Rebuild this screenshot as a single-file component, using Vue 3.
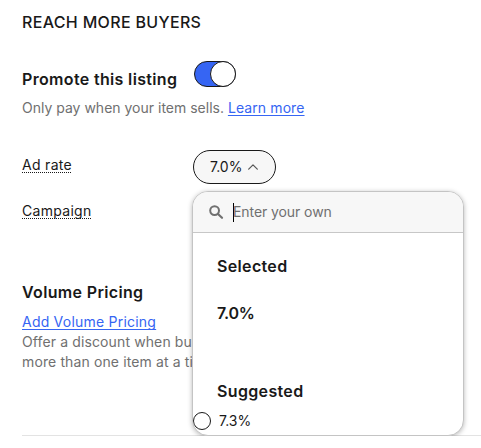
<script setup>
import { ref } from 'vue'

const promoted = ref(true)
const adRate = ref('7.0%')
const suggestedRate = ref('7.3%')
</script>

<template>
  <main class="panel">
    <h2 class="section-title">REACH MORE BUYERS</h2>

    <div class="promote">
      <h3 class="subtitle promote-title">Promote this listing</h3>
      <button class="switch" :class="{ on: promoted }" role="switch" :aria-checked="promoted" @click="promoted = !promoted">
        <span class="knob"></span>
      </button>
    </div>
    <p class="hint"><span class="pay">Only pay when your item sells.</span> <a class="link learn">Learn more</a></p>

    <div class="field rate-field">
      <span class="label rate-label">Ad rate</span>
      <div class="select">
        <button class="select-button">
          <span>{{ adRate }}</span>
          <svg class="chevron" width="10" height="6" viewBox="0 0 10 6">
            <path d="M0.7 5.2 L5 0.9 L9.3 5.2" fill="none" stroke="#555" stroke-width="1.2" stroke-linecap="round" stroke-linejoin="round" />
          </svg>
        </button>
        <div class="menu">
          <div class="search">
            <svg class="search-icon" width="15" height="15" viewBox="0 0 15 15">
              <circle cx="5.6" cy="5.6" r="4.4" fill="none" stroke="#707070" stroke-width="2" />
              <path d="M9 9 L13 12.8" stroke="#707070" stroke-width="2.2" stroke-linecap="round" />
            </svg>
            <span class="caret"></span>
            <span class="placeholder">Enter your own</span>
          </div>
          <div class="menu-title selected">Selected</div>
          <div class="menu-title value">{{ adRate }}</div>
          <div class="menu-title suggested">Suggested</div>
          <div class="option">
            <span class="radio"></span>
            <span>{{ suggestedRate }}</span>
          </div>
        </div>
      </div>
    </div>

    <div class="field campaign-field">
      <span class="label campaign-label">Campaign</span>
    </div>

    <section class="volume">
      <h3 class="subtitle volume-title">Volume Pricing</h3>
      <a class="link volume-link">Add Volume Pricing</a>
      <p class="offer">Offer a discount when buyers purchase<br />more than one item at a time</p>
    </section>
  </main>
</template>

<style>
body {
  margin: 0;
  background: #fff;
}
</style>

<style scoped>
.panel {
  box-sizing: border-box;
  height: 436px;
  margin-left: 22px;
  padding-top: 12px;
  border-bottom: 1px solid #e3e3e3;
  font-family: Inter, "Liberation Sans", sans-serif;
  font-size: 14px;
  line-height: 20px;
  color: #191919;
  white-space: nowrap;
}
h2, h3, p {
  margin: 0;
}
.section-title {
  font-size: 16px;
  font-weight: 500;
  line-height: 20px;
  letter-spacing: 0.33px;
}
.promote {
  display: flex;
  align-items: flex-start;
  margin-top: 29px;
  height: 37px;
}
.subtitle {
  font-size: 16px;
  font-weight: 600;
  line-height: 20px;
  letter-spacing: 0.34px;
}
.promote-title {
  width: 172px;
  padding-top: 8px;
}
.switch {
  box-sizing: border-box;
  width: 42px;
  height: 26px;
  padding: 0;
  display: flex;
  border: 1px solid #191919;
  border-radius: 13px;
  background: #8f8f8f;
}
.switch.on {
  justify-content: flex-end;
  background: #3665f3;
}
.knob {
  box-sizing: border-box;
  width: 26px;
  height: 26px;
  margin: -1px;
  border: 1px solid #191919;
  border-radius: 50%;
  background: #fff;
}
.hint {
  color: #707070;
}
.learn {
  letter-spacing: 0.1px;
}
.link {
  color: #3665f3;
  text-decoration: underline;
  text-underline-offset: 2px;
  text-decoration-thickness: 1px;
  text-decoration-skip-ink: none;
}
.field {
  display: flex;
  align-items: flex-start;
}
.rate-field {
  margin-top: 32px;
  height: 34px;
}
.rate-label {
  margin-top: 5px;
}
.label {
  color: #191919;
  letter-spacing: 0.3px;
  text-decoration: underline dotted 1px;
  text-underline-offset: 2px;
  text-decoration-skip-ink: none;
}
.select {
  position: relative;
  margin-left: auto;
  width: 288px;
}
.select-button {
  box-sizing: border-box;
  display: flex;
  align-items: center;
  gap: 6px;
  width: 83px;
  height: 34px;
  padding: 0 0 0 16px;
  border: 1px solid #191919;
  border-radius: 17px;
  background: #f7f7f7;
  color: #191919;
  font: inherit;
}
.menu {
  position: absolute;
  left: -1px;
  top: 41px;
  box-sizing: border-box;
  width: 272px;
  height: 245px;
  overflow: hidden;
  border: 1px solid #c4c4c4;
  border-radius: 16px;
  background: #fff;
  box-shadow: 0 1px 5px rgba(0, 0, 0, 0.28);
}
.search {
  box-sizing: border-box;
  display: flex;
  align-items: center;
  height: 41px;
  padding-left: 16px;
  border-bottom: 1px solid #c7c7c7;
  background: #f7f7f7;
  color: #707070;
}
.caret {
  width: 1px;
  height: 19px;
  margin-left: 9px;
  background: #000;
}
.placeholder {
  margin-left: -1px;
  letter-spacing: -0.08px;
}
.menu-title {
  padding-left: 24px;
  font-size: 16px;
  font-weight: 600;
  line-height: 20px;
  letter-spacing: 0.34px;
}
.selected {
  margin-top: 23px;
}
.value {
  margin-top: 27px;
  letter-spacing: -0.2px;
}
.suggested {
  margin-top: 58px;
}
.option {
  display: flex;
  align-items: center;
  gap: 8px;
  margin-top: 10px;
}
.radio {
  box-sizing: border-box;
  width: 18px;
  height: 18px;
  border: 1px solid #191919;
  border-radius: 50%;
}
.campaign-field {
  margin-top: 17px;
}
.volume {
  margin-top: 61px;
}
.volume-link {
  display: block;
  width: fit-content;
  margin-top: 10px;
  letter-spacing: 0.22px;
}
.offer {
  color: #707070;
  letter-spacing: 0.12px;
}
</style>
